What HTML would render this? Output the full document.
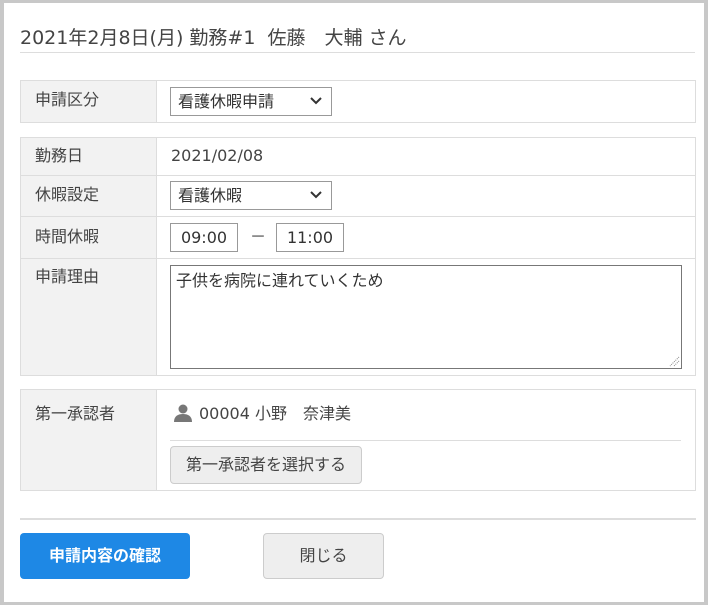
<!DOCTYPE html><html><head><meta charset="utf-8"><style>
*{box-sizing:border-box;margin:0;padding:0}
body{width:708px;height:605px;background:#c8c8c8;position:relative;overflow:hidden;font-family:"DejaVu Sans","Noto Sans CJK JP",sans-serif;color:#444;font-size:16px}
.a{position:absolute}
.panel{left:4px;top:3px;width:700px;height:599px;background:#fff}
.tb{border:1px solid #ddd;background:#fff}
.lab{background:#f2f2f2;border-right:1px solid #ddd}
.hl{height:1px;background:#ddd}
.sel{border:1px solid #999;background:#fff;padding-left:7px;line-height:27px;font-size:16px;color:#333}
.inp{border:1px solid #999;background:#fff;text-align:center;line-height:27px;font-size:16px;color:#333}
.t{font-size:16px;color:#444;line-height:20px}
</style></head><body>
<div class="a panel"></div>
<div class="a" style="left:20px;top:24px;font-size:19px;line-height:28px;color:#444">2021年2月8日(月) 勤務#1&nbsp; 佐藤　大輔 さん</div>
<div class="a hl" style="left:20px;top:52px;width:675px"></div>

<div class="a tb" style="left:20px;top:80px;width:676px;height:43px"></div>
<div class="a lab" style="left:21px;top:81px;width:136px;height:41px"></div>
<div class="a t" style="left:35px;top:90px">申請区分</div>
<div class="a sel" style="left:170px;top:87px;width:162px;height:29px">看護休暇申請</div>

<div class="a tb" style="left:20px;top:137px;width:676px;height:239px"></div>
<div class="a lab" style="left:21px;top:138px;width:136px;height:237px"></div>
<div class="a hl" style="left:21px;top:175px;width:674px"></div>
<div class="a hl" style="left:21px;top:216px;width:674px"></div>
<div class="a hl" style="left:21px;top:258px;width:674px"></div>
<div class="a t" style="left:35px;top:146px">勤務日</div>
<div class="a t" style="left:171px;top:146px">2021/02/08</div>
<div class="a t" style="left:35px;top:185px">休暇設定</div>
<div class="a sel" style="left:170px;top:181px;width:162px;height:29px">看護休暇</div>
<div class="a t" style="left:35px;top:227px">時間休暇</div>
<div class="a inp" style="left:170px;top:223px;width:68px;height:29px">09:00</div>
<div class="a t" style="left:250px;top:227px">－</div>
<div class="a inp" style="left:276px;top:223px;width:68px;height:29px">11:00</div>
<div class="a t" style="left:35px;top:267px">申請理由</div>
<div class="a" style="left:170px;top:265px;width:512px;height:104px;border:1px solid #777;padding:4px 5px;font-size:16px;line-height:22px;color:#333">子供を病院に連れていくため</div>
<svg class="a" style="left:668px;top:355px" width="12" height="12"><path d="M11 2L2 11M11 6L6 11" stroke="#888" stroke-dasharray="1 1"/></svg>

<div class="a tb" style="left:20px;top:389px;width:676px;height:102px"></div>
<div class="a lab" style="left:21px;top:390px;width:136px;height:100px"></div>
<div class="a t" style="left:35px;top:404px">第一承認者</div>
<svg class="a" style="left:173px;top:403px" width="20" height="20"><circle cx="10" cy="6" r="4.5" fill="#777"/><path d="M1 19c0-6 4-8 9-8s9 2 9 8z" fill="#777"/></svg>
<div class="a t" style="left:199px;top:404px">00004 小野　奈津美</div>
<div class="a hl" style="left:170px;top:440px;width:511px"></div>
<div class="a" style="left:170px;top:446px;width:192px;height:38px;border:1px solid #ccc;border-radius:4px;background:#eee;text-align:center;line-height:36px;font-size:16px;color:#444">第一承認者を選択する</div>

<div class="a" style="left:20px;top:518px;width:676px;height:2px;background:#ddd"></div>
<div class="a" style="left:20px;top:533px;width:170px;height:46px;background:#1e88e5;border-radius:4px;color:#fff;font-weight:bold;text-align:center;line-height:46px;font-size:16px">申請内容の確認</div>
<div class="a" style="left:263px;top:533px;width:121px;height:46px;background:#eee;border:1px solid #ccc;border-radius:4px;text-align:center;line-height:44px;font-size:16px;color:#444">閉じる</div>
<svg class="a" style="left:309px;top:96px" width="14" height="10"><path d="M2 2l5 5 5-5" stroke="#333" stroke-width="2" fill="none"/></svg>
<svg class="a" style="left:309px;top:190px" width="14" height="10"><path d="M2 2l5 5 5-5" stroke="#333" stroke-width="2" fill="none"/></svg>
</body></html>
